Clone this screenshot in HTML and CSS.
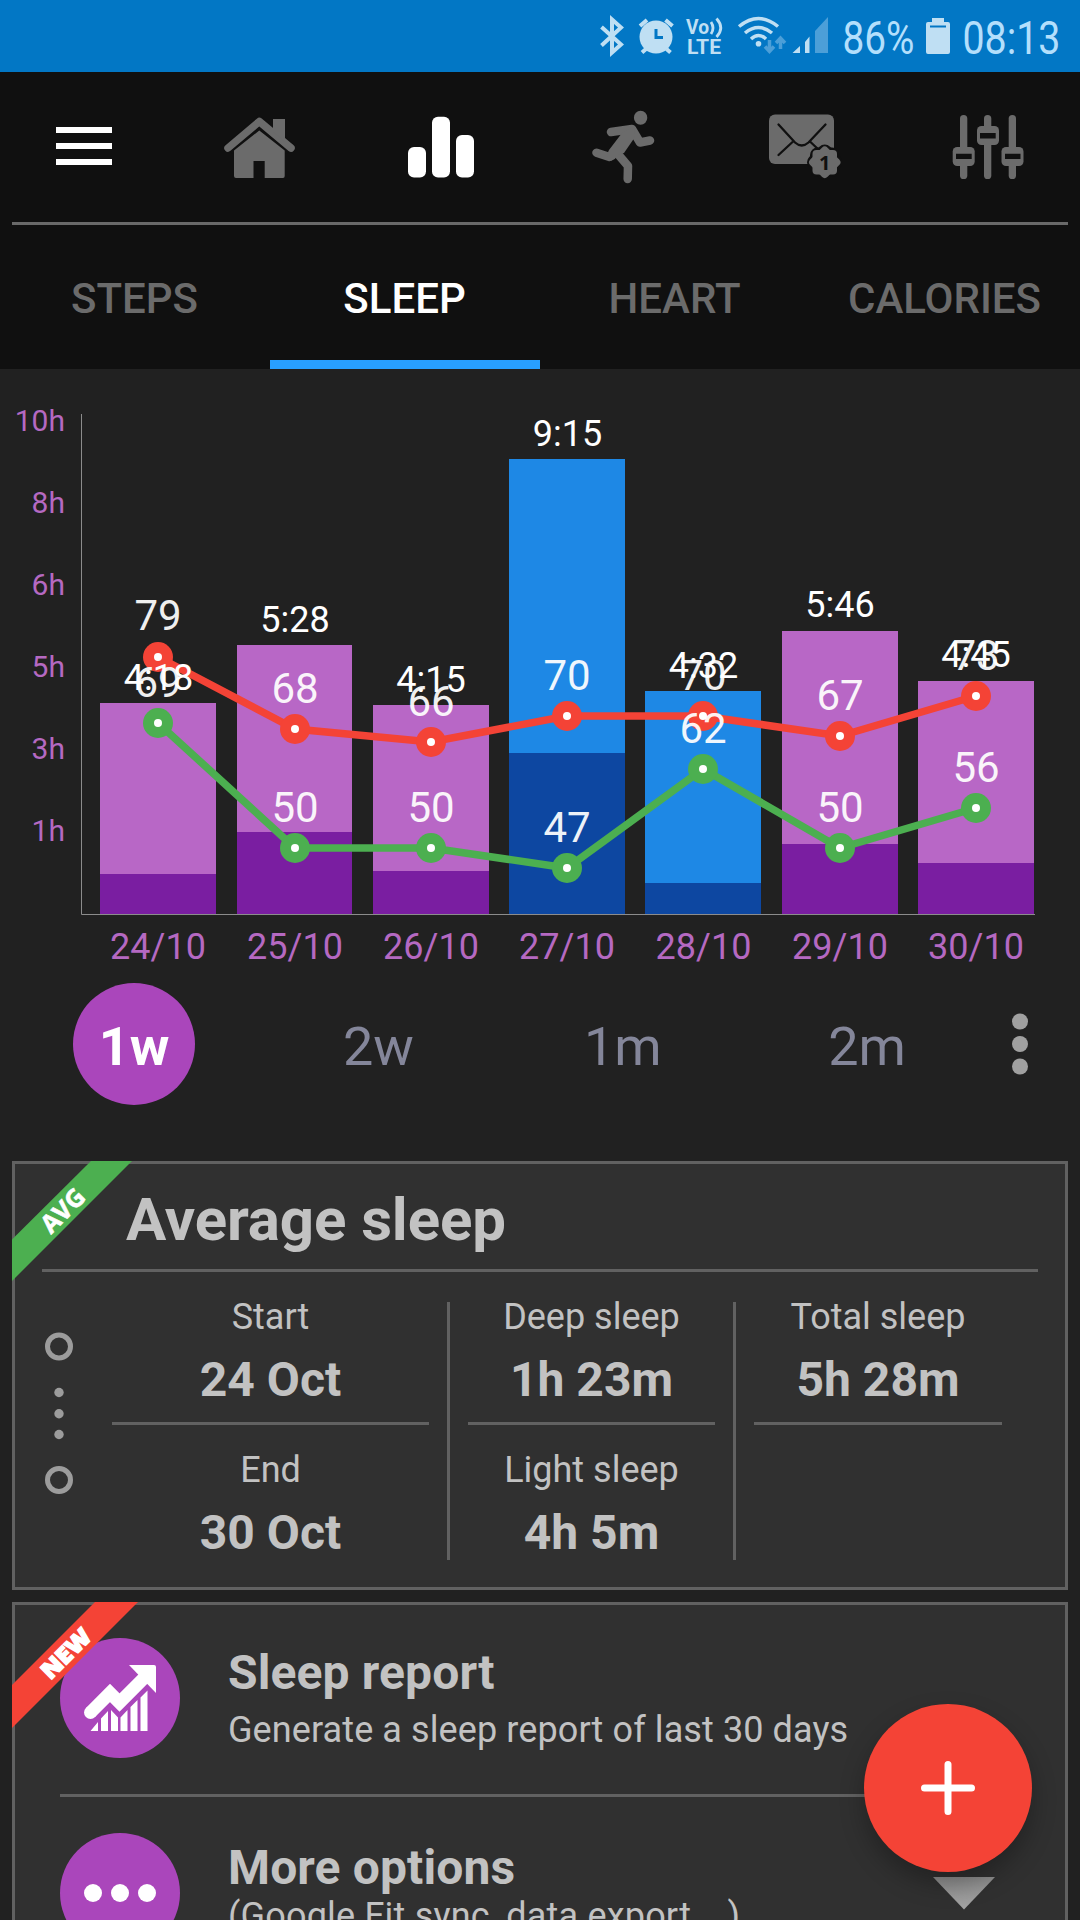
FILE: index.html
```html
<!DOCTYPE html>
<html lang="en">
<head>
    <meta charset="UTF-8">
    <meta name="viewport" content="width=device-width, initial-scale=1.0">
    <title>Sleep</title>
    <link rel="stylesheet" href="styles.css">
</head>
<body>
    <!-- Status bar -->
    <div class="status">
        <svg class="status-icons" viewBox="590 0 490 72" width="490" height="72">
            <!-- bluetooth -->
            <path class="line" stroke-width="4" d="M601.5 27L621 44.5L612 52.5V19.5L621 27.5L601.5 45.5"/>
            <!-- alarm -->
            <circle cx="656" cy="37" r="16.5"/>
            <path class="line" stroke-width="4" d="M640 26L647 20M665.5 20L672.5 26M646 49L642 52.5M666.5 49L670.5 52.5"/>
            <path class="cut" stroke-width="3" d="M656 29V37.5H663"/>
            <!-- volte -->
            <text class="volte" x="686" y="34" textLength="23" lengthAdjust="spacingAndGlyphs">Vo</text>
            <path class="line" stroke-width="2.8" d="M711 22Q715 28 711 34M716.5 18.5Q725 28 716.5 37"/>
            <text class="volte" x="687" y="53.5" textLength="34" lengthAdjust="spacingAndGlyphs">LTE</text>
            <!-- wifi -->
            <path class="line" stroke-width="3.5" d="M739 26.5Q758.5 10.5 778 26.5M745 33Q758.5 22 772 33M751 39Q758.5 32 766 39"/>
            <circle cx="758.5" cy="43.7" r="2.8"/>
            <path class="dim-line" d="M769.5 40V51M765 46.5L769.5 51.5L774 46.5M780.5 49V38M776 43L780.5 38L785 43"/>
            <!-- signal -->
            <path d="M792.5 53L800 46V53ZM805 53V42L809.5 36.5V53Z"/>
            <path class="dim" d="M815 53V31L828 17V53Z"/>
            <text class="clock" x="842.5" y="54" textLength="72" lengthAdjust="spacingAndGlyphs">86%</text>
            <!-- battery -->
            <path d="M928 22H932V18H944V22H948Q950 22 950 24V52Q950 54 948 54H928Q926 54 926 52V24Q926 22 928 22Z"/>
            <path class="cut" stroke-width="2" d="M930 26.5H946"/>
            <text class="clock" x="962.5" y="54" textLength="98" lengthAdjust="spacingAndGlyphs">08:13</text>
        </svg>
    </div>

    <!-- Header -->
    <div class="header">
        <div class="nav">
            <svg class="nav-menu" viewBox="56 127 56 40" width="56" height="40"><path d="M56 127H112V133H56ZM56 143H112V149H56ZM56 159H112V165H56Z"/></svg>
            <svg viewBox="223 115 73 64" width="73" height="64">
                <path d="M273 119.5Q273 119 274 119H284Q285 119 285 120V145L273 134Z"/>
                <path class="bg-stroke" d="M228.5 149.5L259.3 122.5L290.5 149.5"/>
                <path class="roof" d="M228 148L259.3 121.5L291 148"/>
                <path d="M259.3 130.5L284.7 150.5V176Q284.7 178 283 178H264.7V161H253.5V178H236Q234 178 234 176V150.5Z"/>
                <path d="M273 119H285V142L273 131.5Z"/>
            </svg>
            <svg class="active" viewBox="408 116 66 62" width="66" height="62">
                <rect x="408" y="147" width="18" height="30.5" rx="6"/>
                <rect x="432" y="116.7" width="18" height="60.8" rx="6"/>
                <rect x="456" y="135" width="18" height="42.5" rx="6"/>
            </svg>
            <svg viewBox="592 110 63 74" width="63" height="74">
                <ellipse cx="640.6" cy="117.7" rx="6.7" ry="7"/>
                <path class="limb" d="M611 132L632 129L640 142.5L650 140.5M596.5 152.7L609.5 157M617 153L628 166L627.7 179"/>
                <path d="M622 133L609 150Q606 155 609 160Q614 162 618 155L624 153L635 137L634 127Z"/>
            </svg>
            <svg viewBox="769 114 73 66" width="73" height="66">
                <rect x="769" y="114.5" width="65" height="49.5" rx="6"/>
                <path class="fold" d="M778.5 124.5L795 142.5Q801.7 148.5 808.5 142.5L825.5 124.5M778.5 155L792.5 142M810.5 142L819 150"/>
                <g class="badge">
                    <rect x="812.5" y="150" width="24.5" height="24.5" rx="5"/>
                    <rect x="812.5" y="150" width="24.5" height="24.5" rx="5" transform="rotate(45 824.75 162.25)"/>
                </g>
                <rect x="812.5" y="150" width="24.5" height="24.5" rx="4"/>
                <rect x="812.5" y="150" width="24.5" height="24.5" rx="4" transform="rotate(45 824.75 162.25)"/>
                <text class="badge-text" x="824.75" y="169.5">1</text>
            </svg>
            <svg viewBox="952 114 72 66" width="72" height="66">
                <rect x="960" y="115" width="7.3" height="64" rx="3.6"/>
                <rect x="984" y="115" width="7.3" height="64" rx="3.6"/>
                <rect x="1008.7" y="115" width="7.3" height="64" rx="3.6"/>
                <rect x="952.7" y="147" width="22" height="19" rx="4.5"/>
                <rect x="977" y="126" width="22" height="19" rx="4.5"/>
                <rect x="1001.5" y="147" width="22" height="19" rx="4.5"/>
                <path class="slot" d="M956 153.7H971.7V159H956ZM980 133H995.7V138.5H980ZM1005 153.7H1020.5V159H1005Z"/>
            </svg>
        </div>
        <div class="tabs">
            <div class="tab">STEPS</div>
            <div class="tab selected">SLEEP</div>
            <div class="tab">HEART</div>
            <div class="tab">CALORIES</div>
        </div>
    </div>

    <!-- Sleep chart -->
    <svg class="chart" viewBox="0 369 1080 614" width="1080" height="614">
        <g class="hours">
            <text x="65" y="431">10h</text>
            <text x="65" y="513">8h</text>
            <text x="65" y="595">6h</text>
            <text x="65" y="677">5h</text>
            <text x="65" y="759">3h</text>
            <text x="65" y="841">1h</text>
        </g>
        <g class="light">
            <rect x="100" y="703" width="116" height="171"/>
            <rect x="237" y="645" width="115" height="187"/>
            <rect x="373" y="705" width="116" height="166"/>
            <rect class="blue" x="509" y="459" width="116" height="294"/>
            <rect class="blue" x="645" y="691" width="116" height="192"/>
            <rect x="782" y="631" width="116" height="213"/>
            <rect x="918" y="681" width="116" height="182"/>
        </g>
        <g class="deep">
            <rect x="100" y="874" width="116" height="40"/>
            <rect x="237" y="832" width="115" height="82"/>
            <rect x="373" y="871" width="116" height="43"/>
            <rect class="blue" x="509" y="753" width="116" height="161"/>
            <rect class="blue" x="645" y="883" width="116" height="31"/>
            <rect x="782" y="844" width="116" height="70"/>
            <rect x="918" y="863" width="116" height="51"/>
        </g>
        <path class="axis" d="M81.5 414V914.5H1035"/>
        <g class="max">
            <polyline points="158,657 295,729 431,742 567,716 703,716 840,736 976,696"/>
            <circle cx="158" cy="657" r="15"/><circle class="dot" cx="158" cy="657" r="4"/>
            <circle cx="295" cy="729" r="15"/><circle class="dot" cx="295" cy="729" r="4"/>
            <circle cx="431" cy="742" r="15"/><circle class="dot" cx="431" cy="742" r="4"/>
            <circle cx="567" cy="716" r="15"/><circle class="dot" cx="567" cy="716" r="4"/>
            <circle cx="703" cy="716" r="15"/><circle class="dot" cx="703" cy="716" r="4"/>
            <circle cx="840" cy="736" r="15"/><circle class="dot" cx="840" cy="736" r="4"/>
            <circle cx="976" cy="696" r="15"/><circle class="dot" cx="976" cy="696" r="4"/>
        </g>
        <g class="min">
            <polyline points="158,723 295,848 431,848 567,868 703,769 840,848 976,808"/>
            <circle cx="158" cy="723" r="15"/><circle class="dot" cx="158" cy="723" r="4"/>
            <circle cx="295" cy="848" r="15"/><circle class="dot" cx="295" cy="848" r="4"/>
            <circle cx="431" cy="848" r="15"/><circle class="dot" cx="431" cy="848" r="4"/>
            <circle cx="567" cy="868" r="15"/><circle class="dot" cx="567" cy="868" r="4"/>
            <circle cx="703" cy="769" r="15"/><circle class="dot" cx="703" cy="769" r="4"/>
            <circle cx="840" cy="848" r="15"/><circle class="dot" cx="840" cy="848" r="4"/>
            <circle cx="976" cy="808" r="15"/><circle class="dot" cx="976" cy="808" r="4"/>
        </g>
        <g class="totals">
            <text x="158.5" y="690">4:18</text>
            <text x="295" y="632">5:28</text>
            <text x="431" y="692">4:15</text>
            <text x="567.5" y="446">9:15</text>
            <text x="703.5" y="678">4:32</text>
            <text x="840" y="617">5:46</text>
            <text x="976" y="667">4:45</text>
        </g>
        <g class="rates">
            <text x="158" y="630">79</text>
            <text x="295" y="703">68</text>
            <text x="431" y="716">66</text>
            <text x="567" y="690">70</text>
            <text x="703" y="690">70</text>
            <text x="840" y="710">67</text>
            <text x="976" y="670">73</text>
            <text x="158" y="697">69</text>
            <text x="295" y="822">50</text>
            <text x="431" y="822">50</text>
            <text x="567" y="842">47</text>
            <text x="703" y="743">62</text>
            <text x="840" y="822">50</text>
            <text x="976" y="782">56</text>
        </g>
        <g class="dates">
            <text x="158" y="959">24/10</text>
            <text x="295" y="959">25/10</text>
            <text x="431" y="959">26/10</text>
            <text x="567" y="959">27/10</text>
            <text x="703.5" y="959">28/10</text>
            <text x="840" y="959">29/10</text>
            <text x="976" y="959">30/10</text>
        </g>
    </svg>

    <!-- Period -->
    <div class="periods">
        <div class="period"><span class="current">1w</span></div>
        <div class="period">2w</div>
        <div class="period">1m</div>
        <div class="period">2m</div>
        <svg class="more" width="62" height="122">
            <circle cx="31" cy="38.5" r="8"/>
            <circle cx="31" cy="61" r="8"/>
            <circle cx="31" cy="83.5" r="8"/>
        </svg>
    </div>

    <!-- Average sleep -->
    <div class="card average">
        <svg class="ribbon" width="120" height="120">
            <path class="green" d="M79 0H120L0 120V78.5Z"/>
            <text class="avg" x="51" y="59" textLength="51" lengthAdjust="spacingAndGlyphs" transform="rotate(-45 50 50)">AVG</text>
        </svg>
        <h2>Average sleep</h2>
        <div class="stats">
            <svg class="rail" width="97" height="258">
                <circle class="ring" cx="44" cy="44.5" r="11.5"/>
                <circle cx="44" cy="90.5" r="4.7"/>
                <circle cx="44" cy="111.7" r="4.7"/>
                <circle cx="44" cy="132.5" r="4.7"/>
                <circle class="ring" cx="44" cy="178" r="11.5"/>
            </svg>
            <div class="column">
                <div class="stat first"><p>Start</p><b>24 Oct</b></div>
                <div class="stat"><p>End</p><b>30 Oct</b></div>
            </div>
            <div class="column">
                <div class="stat first"><p>Deep sleep</p><b>1h 23m</b></div>
                <div class="stat"><p>Light sleep</p><b>4h 5m</b></div>
            </div>
            <div class="column">
                <div class="stat first"><p>Total sleep</p><b>5h 28m</b></div>
            </div>
        </div>
    </div>

    <!-- Options -->
    <div class="card options">
        <svg class="ribbon" width="126" height="126">
            <path class="red" d="M83 0H126L0 126V83Z"/>
            <text class="new" x="54" y="60.5" textLength="60" lengthAdjust="spacingAndGlyphs" transform="rotate(-45 53 52)">NEW</text>
        </svg>
        <div class="option">
            <svg class="round" width="120" height="120">
                <circle class="disc" cx="60" cy="60" r="60"/>
                <circle cx="30.5" cy="74.5" r="6.5"/>
                <path class="arrow" d="M30.5 74.5L50 55L59.5 64.500L86 38"/>
                <path d="M69 27H94Q96 27 96 29V55Z"/>
                <path d="M30.5 93L38 84V93ZM41 93V80.5L48 73V93ZM51 93V72L58 79.5V93ZM60.5 93V79.5L67.5 72V93ZM70.5 93V69L77.5 62V93ZM80.5 93V59.5L87.5 52.5V93Z"/>
            </svg>
            <div class="option-text">
                <h3>Sleep report</h3>
                <p>Generate a sleep report of last 30 days</p>
            </div>
        </div>
        <div class="option">
            <svg class="round" width="120" height="120">
                <circle class="disc" cx="60" cy="60" r="60"/>
                <circle cx="33" cy="60" r="9"/>
                <circle cx="60" cy="60" r="9"/>
                <circle cx="87" cy="60" r="9"/>
            </svg>
            <div class="option-text">
                <h3>More options</h3>
                <p class="tight">(Google Fit sync, data export,...)</p>
            </div>
        </div>
    </div>

    <!-- Floating button -->
    <svg class="scroll" width="64" height="34">
        <defs><linearGradient id="fade" x1="0" y1="0" x2="0" y2="1"><stop offset="0" stop-color="#8c8c8c"/><stop offset="1" stop-color="#a4a4a4"/></linearGradient></defs>
        <path fill="url(#fade)" d="M1 0H63L32 32.5Z"/>
    </svg>
    <div class="fab">
        <svg width="54" height="54"><path d="M27 3.5V50.5M3.5 27H50.5"/></svg>
    </div>
</body>
</html>
```
FILE: styles.css
```css
* {
    box-sizing: border-box;
}

body {
    position: relative;
    width: 1080px;
    height: 1920px;
    margin: 0;
    overflow: hidden;
    background-color: #212121;
    color: #c2c2c2;
    font-family: Roboto, sans-serif;
}

h2, h3, p {
    margin: 0;
}

svg {
    display: block;
}

/* Status bar */
.status {
    display: flex;
    justify-content: flex-end;
    height: 72px;
    background-color: #0277c5;
}

.status-icons {
    fill: #bfdff3;
}

.status-icons .line {
    fill: none;
    stroke: #bfdff3;
}

.status-icons .cut {
    fill: none;
    stroke: #0277c5;
}

.status-icons .dim {
    fill: #4c9fd8;
}

.status-icons .dim-line {
    fill: none;
    stroke: #4c9fd8;
    stroke-width: 3.5;
}

.volte {
    font-size: 21px;
    font-weight: 700;
}

.clock {
    font-size: 46px;
    fill: #b3dffc;
}

/* Header */
.header {
    height: 297px;
    background-color: #101010;
}

.nav {
    display: grid;
    grid-template-columns: 167px 185px 184px 177px 183px 72px;
    align-items: center;
    height: 153px;
    margin: 0 12px;
    padding-left: 44px;
    border-bottom: 3px solid #696969;
    fill: #6b6b6b;
}

.nav-menu,
.nav .active {
    fill: #fff;
}

.nav .bg-stroke {
    fill: none;
    stroke: #101010;
    stroke-width: 12;
}

.nav .roof {
    fill: none;
    stroke: #6b6b6b;
    stroke-width: 7.5;
    stroke-linejoin: round;
    stroke-linecap: round;
}

.nav .limb {
    fill: none;
    stroke: #6b6b6b;
    stroke-width: 8.5;
    stroke-linecap: round;
    stroke-linejoin: round;
}

.nav .fold {
    fill: none;
    stroke: #101010;
    stroke-width: 2.3;
    stroke-linecap: round;
}

.nav .badge {
    stroke: #101010;
    stroke-width: 5;
}

.nav .slot {
    fill: #101010;
}

.badge-text {
    font-family: "Open Sans", sans-serif;
    font-size: 20px;
    font-weight: 700;
    text-anchor: middle;
    fill: #101010;
}

.tabs {
    display: flex;
    height: 144px;
}

.tab {
    width: 270px;
    padding: 12px 1px 0 0;
    border-bottom: 9px solid transparent;
    font-size: 42px;
    font-weight: 500;
    line-height: 123px;
    text-align: center;
    color: #6b6b6b;
}

.tab.selected {
    color: #fff;
    border-bottom-color: #289fff;
}

/* Chart */
.chart text {
    text-anchor: middle;
}

.chart .hours text {
    font-size: 30px;
    text-anchor: end;
    fill: #b569c2;
}

.light {
    fill: #b867c6;
}

.light .blue {
    fill: #1e88e5;
}

.deep {
    fill: #7a1ea1;
}

.deep .blue {
    fill: #0d47a1;
}

.axis {
    fill: none;
    stroke: #8c8c8c;
}

.totals {
    font-size: 36px;
    fill: #fff;
}

.rates {
    font-size: 42px;
    fill: #fff;
    opacity: 0.93;
}

.dates {
    font-size: 36px;
    fill: #b569c2;
}

.max {
    fill: #f44336;
    stroke: #f44336;
}

.min {
    fill: #4caf50;
    stroke: #4caf50;
}

.chart polyline {
    fill: none;
    stroke-width: 7.5;
}

.chart circle {
    stroke: none;
}

.chart .dot {
    fill: #fff;
}

/* Period selector */
.periods {
    display: flex;
    height: 122px;
    margin-left: 12px;
    font-size: 54px;
    line-height: 127px;
    color: #84869a;
}

.period {
    flex: 0 0 244.3px;
    display: flex;
    justify-content: center;
}

.current {
    width: 122px;
    height: 122px;
    border-radius: 50%;
    background-color: #aa46bb;
    color: #fff;
    font-weight: 700;
    text-align: center;
}

.more {
    fill: #a0a0a0;
}

/* Cards */
.card {
    position: relative;
    margin: 0 12px;
    border: 3px solid #616161;
    background-color: #303030;
}

.ribbon {
    position: absolute;
    top: -3px;
    left: -3px;
}

.ribbon text {
    text-anchor: middle;
    fill: #fff;
    font-family: "Open Sans", sans-serif;
    font-weight: 700;
}

.ribbon .avg {
    font-size: 25px;
    stroke: #fff;
    stroke-width: 0.6;
}

.ribbon .new {
    font-size: 23px;
    font-weight: 800;
    stroke: #fff;
    stroke-width: 1.4;
}

.green {
    fill: #4caf50;
}

.red {
    fill: #f44336;
}

.average {
    height: 429px;
    margin-top: 56px;
}

.average h2 {
    margin: 0 27px;
    padding: 6px 0 0 84px;
    border-bottom: 3px solid #616161;
    font-size: 60px;
    line-height: 99px;
    letter-spacing: -0.1px;
}

.stats {
    display: grid;
    grid-template-columns: 97px 338px 286px 284px;
    height: 258px;
    margin-top: 30px;
}

.rail {
    fill: #9c9c9c;
}

.rail .ring {
    fill: none;
    stroke: #9c9c9c;
    stroke-width: 5;
}

.column {
    padding: 0 18px;
    border-right: 3px solid #616161;
    text-align: center;
}

.column:nth-child(2) {
    padding-left: 0;
}

.column:last-child {
    border-right: none;
}

.stat p {
    font-size: 36px;
    line-height: 31px;
}

.stat b {
    display: block;
    margin-top: 23px;
    font-size: 48px;
    line-height: 48px;
}

.stat.first {
    margin-bottom: 30px;
    padding-bottom: 18px;
    border-bottom: 3px solid #616161;
}

/* Options card */
.options {
    height: 400px;
    margin-top: 12px;
}

.option {
    display: flex;
    height: 195px;
    margin: 0 45px;
    padding-top: 36px;
    border-bottom: 3px solid #616161;
}

.options .ribbon + .option {
    margin-top: -3px;
}

.round {
    margin-right: 48px;
    fill: #fff;
}

.round .disc {
    fill: #aa46bb;
}

.round .arrow {
    fill: none;
    stroke: #fff;
    stroke-width: 13;
}

.option-text {
    padding-top: 6px;
}

.option-text h3 {
    font-size: 48px;
    line-height: 57px;
    letter-spacing: 0.12px;
}

.option-text p {
    font-size: 36px;
    line-height: 59px;
    letter-spacing: 0.1px;
}

.option-text .tight {
    line-height: 40px;
    letter-spacing: 0.2px;
}

/* Floating button */
.fab {
    position: absolute;
    top: 1704px;
    left: 864px;
    display: flex;
    align-items: center;
    justify-content: center;
    width: 168px;
    height: 168px;
    border-radius: 50%;
    background-color: #f44336;
    box-shadow: 0 12px 24px rgba(0, 0, 0, 0.28);
}

.fab path {
    stroke: #fff;
    stroke-width: 7;
    stroke-linecap: round;
}

.scroll {
    position: absolute;
    top: 1877px;
    left: 932px;
}
```
